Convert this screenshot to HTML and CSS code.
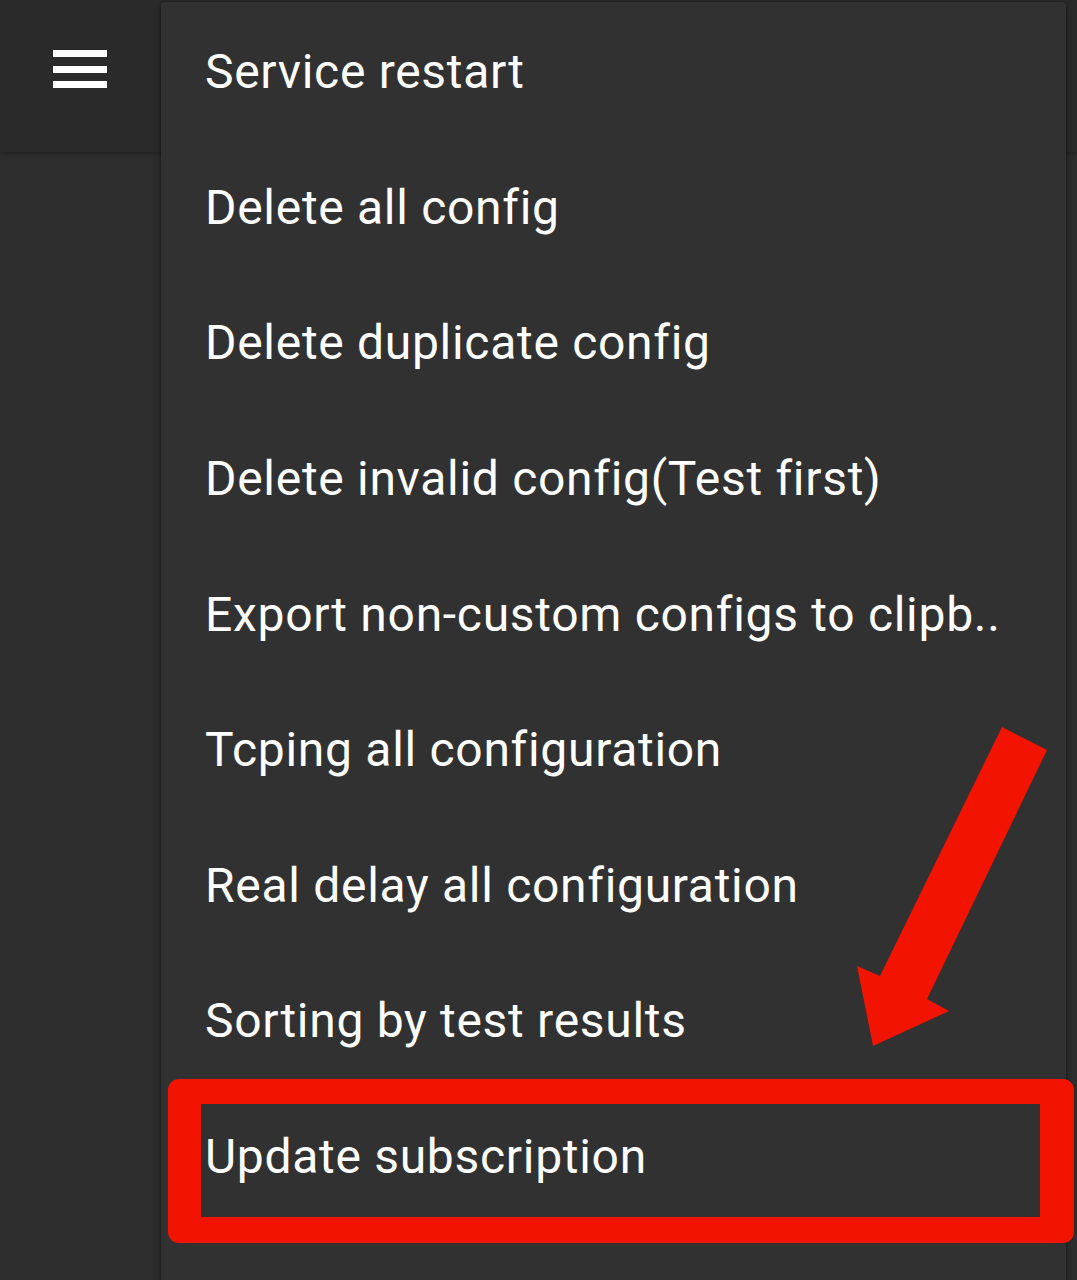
FILE: index.html
```html
<!DOCTYPE html>
<html>
<head>
<meta charset="utf-8">
<link rel="stylesheet" href="styles.css">
</head>
<body>
<div class="screen">
  <header class="appbar">
    <button class="menu-btn" aria-label="Menu">
      <svg width="54" height="38" viewBox="0 0 54 38"><rect x="0" y="0" width="54" height="7" fill="#fff"/><rect x="0" y="16" width="54" height="7" fill="#fff"/><rect x="0" y="31" width="54" height="7" fill="#fff"/></svg>
    </button>
  </header>
  <ul class="popup">
    <li class="item">Service restart</li>
    <li class="item">Delete all config</li>
    <li class="item">Delete duplicate config</li>
    <li class="item">Delete invalid config(Test first)</li>
    <li class="item">Export non-custom configs to clipb..</li>
    <li class="item">Tcping all configuration</li>
    <li class="item">Real delay all configuration</li>
    <li class="item">Sorting by test results</li>
    <li class="item">Update subscription</li>
  </ul>
  <div class="highlight"></div>
  <svg class="arrow" width="1077" height="1280" viewBox="0 0 1077 1280">
    <polygon points="1002,727 1047,750 927,999 949,1011 873,1046 857,966 880,976" fill="#f21300"/>
  </svg>
</div>
</body>
</html>
```
FILE: styles.css
```css
html, body {
  margin: 0;
  padding: 0;
}
body {
  background: #2d2d2d;
  font-family: Roboto, "Noto Sans", sans-serif;
  width: 1077px;
  height: 1280px;
  overflow: hidden;
}
.screen {
  position: relative;
  width: 1077px;
  height: 1280px;
}
.appbar {
  height: 152px;
  background: #2a2a2a;
  box-shadow: 0 2px 4px rgba(0,0,0,0.25);
  display: flex;
  align-items: flex-start;
}
.menu-btn {
  background: none;
  border: 0;
  padding: 0;
  margin: 50px 0 0 53px;
  width: 54px;
  height: 38px;
  display: block;
}
.menu-btn svg { display: block; }
.popup {
  position: absolute;
  left: 161px;
  top: 2px;
  width: 905px;
  height: 1290px;
  margin: 0;
  padding: 2px 0 0 0;
  list-style: none;
  background: #313131;
  border-radius: 4px;
  box-shadow: 0 2px 6px rgba(0,0,0,0.35), 0 0 3px rgba(0,0,0,0.3);
  box-sizing: border-box;
}
.item {
  height: 135.6px;
  display: flex;
  align-items: center;
  padding-left: 44px;
  color: #ffffff;
  font-size: 48px;
  letter-spacing: 0.7px;
  white-space: nowrap;
}
.highlight {
  position: absolute;
  left: 168px;
  top: 1079px;
  width: 906px;
  height: 164px;
  box-sizing: border-box;
  border-style: solid;
  border-color: #f21300;
  border-width: 25px 34px 26px 33px;
  border-radius: 11px;
}
.arrow {
  position: absolute;
  left: 0;
  top: 0;
  pointer-events: none;
}
```
